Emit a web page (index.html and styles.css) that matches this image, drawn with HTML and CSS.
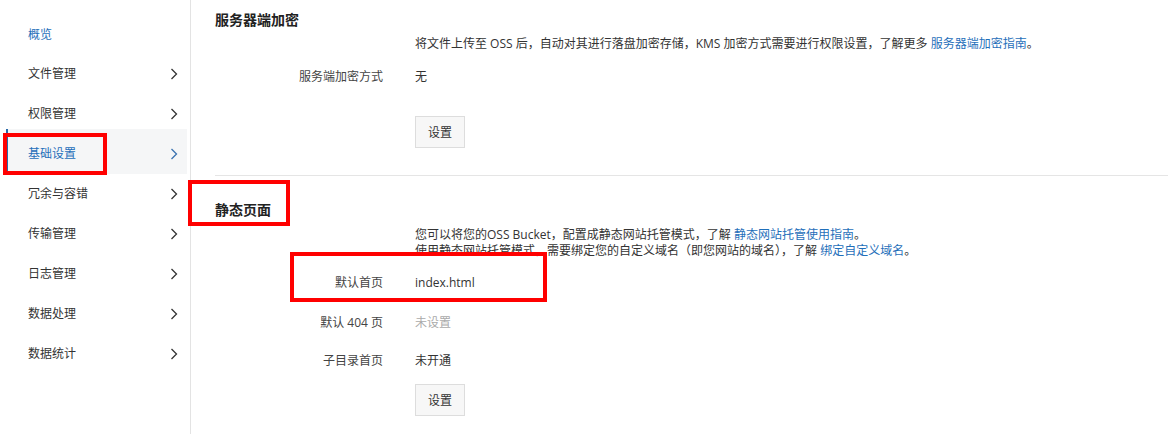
FILE: index.html
```html
<!DOCTYPE html>
<html lang="zh-CN">
<head>
<meta charset="utf-8">
<title>基础设置</title>
<link rel="stylesheet" href="styles.css">
</head>
<body>
<div class="page">
  <nav class="sidebar">
    <div class="nav-item overview">概览</div>
    <div class="nav-item">文件管理<svg class="chev" viewBox="0 0 8 12"><polyline points="1.5,1 6.5,6 1.5,11"/></svg></div>
    <div class="nav-item">权限管理<svg class="chev" viewBox="0 0 8 12"><polyline points="1.5,1 6.5,6 1.5,11"/></svg></div>
    <div class="nav-item active">基础设置<svg class="chev" viewBox="0 0 8 12"><polyline points="1.5,1 6.5,6 1.5,11"/></svg></div>
    <div class="nav-item">冗余与容错<svg class="chev" viewBox="0 0 8 12"><polyline points="1.5,1 6.5,6 1.5,11"/></svg></div>
    <div class="nav-item">传输管理<svg class="chev" viewBox="0 0 8 12"><polyline points="1.5,1 6.5,6 1.5,11"/></svg></div>
    <div class="nav-item">日志管理<svg class="chev" viewBox="0 0 8 12"><polyline points="1.5,1 6.5,6 1.5,11"/></svg></div>
    <div class="nav-item">数据处理<svg class="chev" viewBox="0 0 8 12"><polyline points="1.5,1 6.5,6 1.5,11"/></svg></div>
    <div class="nav-item">数据统计<svg class="chev" viewBox="0 0 8 12"><polyline points="1.5,1 6.5,6 1.5,11"/></svg></div>
  </nav>
  <main class="main">
    <section class="section sec-encrypt">
      <h2 class="title">服务器端加密</h2>
      <div class="grid">
        <div class="desc">将文件上传至 OSS 后，自动对其进行落盘加密存储，KMS 加密方式需要进行权限设置，了解更多 <a class="link">服务器端加密指南</a>。</div>
        <div class="row r-enc">
          <span class="label">服务端加密方式</span><span class="value">无</span>
        </div>
        <div class="row r-btn1">
          <span class="label"></span><span class="value"><button class="btn">设置</button></span>
        </div>
      </div>
    </section>
    <div class="divider"></div>
    <section class="section sec-static">
      <h2 class="title t2">静态页面</h2>
      <div class="grid">
        <div class="desc d2">您可以将您的OSS Bucket，配置成静态网站托管模式，了解 <a class="link">静态网站托管使用指南</a>。<br>使用静态网站托管模式，需要绑定您的自定义域名（即您网站的域名），了解 <a class="link">绑定自定义域名</a>。</div>
        <div class="row r-index">
          <span class="label">默认首页</span><span class="value">index.html</span>
        </div>
        <div class="row r-404">
          <span class="label">默认 404 页</span><span class="value muted">未设置</span>
        </div>
        <div class="row r-sub">
          <span class="label">子目录首页</span><span class="value">未开通</span>
        </div>
        <div class="row r-btn2">
          <span class="label"></span><span class="value"><button class="btn">设置</button></span>
        </div>
      </div>
    </section>
  </main>
  <div class="mark mark-nav"></div>
  <div class="mark mark-title"></div>
  <div class="mark mark-row"></div>
</div>
</body>
</html>
```
FILE: styles.css
```css
* { box-sizing: border-box; }
html, body { margin: 0; padding: 0; background: #fff; }
body {
  font-family: "Open Sans", "Noto Sans CJK SC", sans-serif;
  font-size: 12px;
  color: #333;
}
.page {
  position: relative;
  display: flex;
  width: 1168px;
  height: 434px;
  overflow: hidden;
}
.sidebar {
  width: 191px;
  flex: none;
  border-right: 1px solid #e3e3e3;
  padding: 15px 3px 0 6px;
}
.nav-item {
  height: 40px;
  display: flex;
  align-items: center;
  justify-content: space-between;
  padding: 0 9px 0 20px;
  border-left: 2px solid transparent;
  color: #333;
  line-height: 16px;
}
.nav-item.overview { color: #1f6fba; height: 39px; }
.nav-item.active {
  background: #f5f6f7;
  border-left-color: #2a68a8;
  color: #1f6fba;
  height: 45px;
  margin-top: -5px;
  padding-top: 5px;
}
.chev {
  width: 8px;
  height: 12px;
  fill: none;
  stroke: #333;
  stroke-width: 1.3;
}
.active .chev { stroke: #3a72b0; }
.main {
  flex: 1;
  padding-left: 24px;
}
.section { padding-top: 10px; }
.title {
  margin: 0;
  font-size: 14px;
  font-weight: bold;
  line-height: 20px;
  color: #222;
}
.grid { display: flex; flex-direction: column; }
.desc {
  margin-top: 6px;
  padding-left: 200px;
  line-height: 16px;
  color: #333;
}
.link { color: #1f6fba; text-decoration: none; }
.row {
  display: flex;
  line-height: 20px;
  gap: 32px;
}
.label {
  width: 168px;
  text-align: right;
  color: #444;
}
.value { color: #333; }
.value.muted { color: #aaa; }
.r-enc { margin-top: 15px; }
.r-btn1 { margin-top: 29px; }
.btn {
  display: block;
  width: 50px;
  height: 32px;
  border: 1px solid #ddd;
  background: #f7f7f7;
  font-family: inherit;
  font-size: 12px;
  color: #333;
  padding: 0;
}
.sec-encrypt { padding-bottom: 27px; }
.divider { height: 1px; background: #e5e5e5; }
.sec-static { padding-top: 24px; }
.d2 { margin-top: 7px; }
.r-index { margin-top: 14px; }
.r-404 { margin-top: 20px; }
.r-sub { margin-top: 18px; }
.r-btn2 { margin-top: 13px; }
.mark {
  position: absolute;
  border: 4px solid #f00;
}
.mark-nav { left: 3px; top: 133px; width: 104px; height: 42px; }
.mark-title { left: 188px; top: 180px; width: 102px; height: 46px; }
.mark-row { left: 290px; top: 252px; width: 257px; height: 50px; }
```
